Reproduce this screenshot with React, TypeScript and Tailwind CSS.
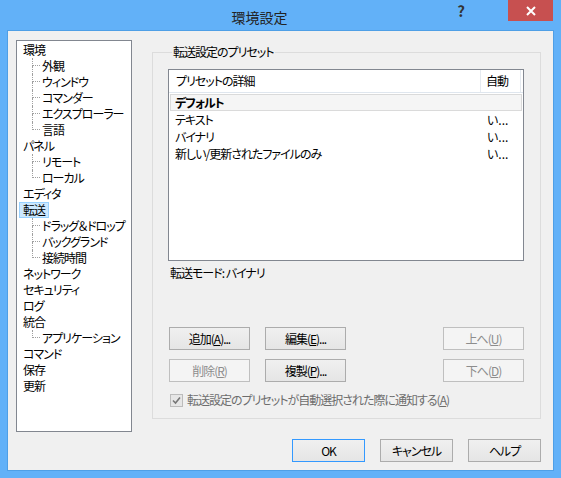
import type { ReactNode } from "react"

type Node = { label: string; children?: string[]; selected?: boolean }

const tree: Node[] = [
  { label: "環境", children: ["外観", "ウィンドウ", "コマンダー", "エクスプローラー", "言語"] },
  { label: "パネル", children: ["リモート", "ローカル"] },
  { label: "エディタ" },
  { label: "転送", selected: true, children: ["ドラッグ＆ドロップ", "バックグランド", "接続時間"] },
  { label: "ネットワーク" },
  { label: "セキュリティ" },
  { label: "ログ" },
  { label: "統合", children: ["アプリケーション"] },
  { label: "コマンド" },
  { label: "保存" },
  { label: "更新" },
]

const presets = [
  { name: "テキスト", auto: "い..." },
  { name: "バイナリ", auto: "い..." },
  { name: "新しい/更新されたファイルのみ", auto: "い..." },
]

function Btn({
  children,
  w = "w-[81px]",
  disabled,
  def,
  className = "",
}: {
  children: ReactNode
  w?: string
  disabled?: boolean
  def?: boolean
  className?: string
}) {
  const look = disabled
    ? "border-[#bfbfbf] bg-[#f4f4f4] text-[#8d8d8d]"
    : def
      ? "border-[#3399ff] bg-linear-to-b from-[#f0f0f0] to-[#e5e5e5] text-black"
      : "border-[#acacac] bg-linear-to-b from-[#f0f0f0] to-[#e5e5e5] text-black"
  return (
    <div className={`h-[23px] ${w} flex items-center justify-center border whitespace-nowrap ${look} ${className}`}>
      {children}
    </div>
  )
}

function Tree() {
  return (
    <div className="w-[116px] h-[392px] border border-[#828790] bg-white pt-[1px] overflow-hidden whitespace-nowrap">
      {tree.map((n) => (
        <div key={n.label}>
          <div className="h-[16px] flex pl-[2px]">
            <span
              className={`px-[3px] border leading-[14px] ${
                n.selected ? "bg-[#cce8ff] border-[#99d1ff]" : "border-transparent"
              }`}
            >
              {n.label}
            </span>
          </div>
          {n.children?.map((c, i) => {
            const last = i === n.children!.length - 1
            return (
              <div key={c} className="h-[16px] flex pl-[15px]">
                <div className="w-[8px] shrink-0 flex flex-col">
                  <div className="h-[8px] border-l border-b border-dotted border-[#a0a0a0]" />
                  <div className={`h-[8px] ${last ? "" : "border-l border-dotted border-[#a0a0a0]"}`} />
                </div>
                <span className="pl-[2px]">{c}</span>
              </div>
            )
          })}
        </div>
      ))}
    </div>
  )
}

function PresetList() {
  return (
    <div className="w-[356px] h-[192px] border border-[#828790] bg-white whitespace-nowrap">
      <div className="h-[23px] flex border-b border-[#dfe6ee]">
        <div className="w-[312px] pl-[7px] flex items-center border-r border-[#e5eaf0]">プリセットの詳細</div>
        <div className="w-[40px] pl-[5px] flex items-center border-r border-[#e5eaf0]">自動</div>
      </div>
      <div className="mt-[1px] mx-[1px] h-[17px] flex items-center border border-[#dadada] bg-[#f5f5f5] font-bold">
        <div className="w-[310px] pl-[4px]">デフォルト</div>
      </div>
      {presets.map((p) => (
        <div key={p.name} className="h-[17px] flex items-center">
          <div className="w-[313px] pl-[6px]">{p.name}</div>
          <div className="pl-[5px] tracking-normal">{p.auto}</div>
        </div>
      ))}
    </div>
  )
}

export default function App() {
  return (
    <div className="w-[561px] h-[478px] bg-[#62b1f8] flex flex-col px-[7px] pb-[7px] font-['Meiryo_UI','Noto_Sans_CJK_JP','Noto_Sans',sans-serif] [font-feature-settings:'palt'] text-[12px] leading-[16px] text-black">
      {/* title bar */}
      <div className="h-[30px] flex items-start -mx-[7px] pr-[8px] shrink-0">
        <div className="flex-1 pl-[68px] pt-[7px] text-center text-[14px] leading-[20px] text-[#222]">環境設定</div>
        <div className="w-[20px] mt-[3px] mr-[37px] text-center text-[15px] leading-[16px] font-bold text-[#333]">?</div>
        <div className="w-[45px] h-[21px] bg-[#c75050] flex items-center justify-center">
          <svg width="10" height="10" viewBox="0 0 10 10">
            <path d="M1 1 L9 9 M9 1 L1 9" stroke="white" strokeWidth="2" />
          </svg>
        </div>
      </div>

      {/* client */}
      <div className="flex-1 border border-[#4f9fe6] bg-[#f0f0f0] flex flex-col tracking-[-1px]">
        <div className="flex pt-[9px] pl-[8px]">
          <Tree />
          <fieldset className="ml-[20px] mt-[4px] w-[389px] h-[375px] border border-[#dcdcdc] pl-[15px]">
            <legend className="ml-[4px] px-[1px]">転送設定のプリセット</legend>
            <div className="mt-[9px]">
              <PresetList />
            </div>
            <div className="mt-[4px] ml-[2px]">転送モード:&nbsp;バイナリ</div>
            <div className="mt-[46px] ml-[1px] w-[355px] flex">
              <Btn>
                追加(<u>A</u>)...
              </Btn>
              <Btn className="ml-[15px]">
                編集(<u>E</u>)...
              </Btn>
              <Btn disabled className="ml-auto">
                上へ(<u>U</u>)
              </Btn>
            </div>
            <div className="mt-[9px] ml-[1px] w-[355px] flex">
              <Btn disabled>
                削除(<u>R</u>)
              </Btn>
              <Btn className="ml-[15px]">
                複製(<u>P</u>)...
              </Btn>
              <Btn disabled className="ml-auto">
                下へ(<u>D</u>)
              </Btn>
            </div>
            <div className="mt-[10px] ml-[2px] h-[16px] flex items-center whitespace-nowrap">
              <div className="w-[13px] h-[13px] border border-[#bcbcbc] bg-[#e6e6e6] flex items-center justify-center">
                <svg width="9" height="9" viewBox="0 0 9 9">
                  <path d="M1 4.5 L3.5 7 L8 1.5" fill="none" stroke="#777" strokeWidth="1.6" />
                </svg>
              </div>
              <span className="ml-[4px] text-[#6d6d6d]">
                転送設定のプリセットが自動選択された際に通知する(<u>A</u>)
              </span>
            </div>
          </fieldset>
        </div>
        <div className="mt-[7px] pr-[12px] flex justify-end gap-[15px]">
          <Btn w="w-[73px]" def>
            OK
          </Btn>
          <Btn w="w-[73px]">キャンセル</Btn>
          <Btn w="w-[73px]">ヘルプ</Btn>
        </div>
      </div>
    </div>
  )
}
